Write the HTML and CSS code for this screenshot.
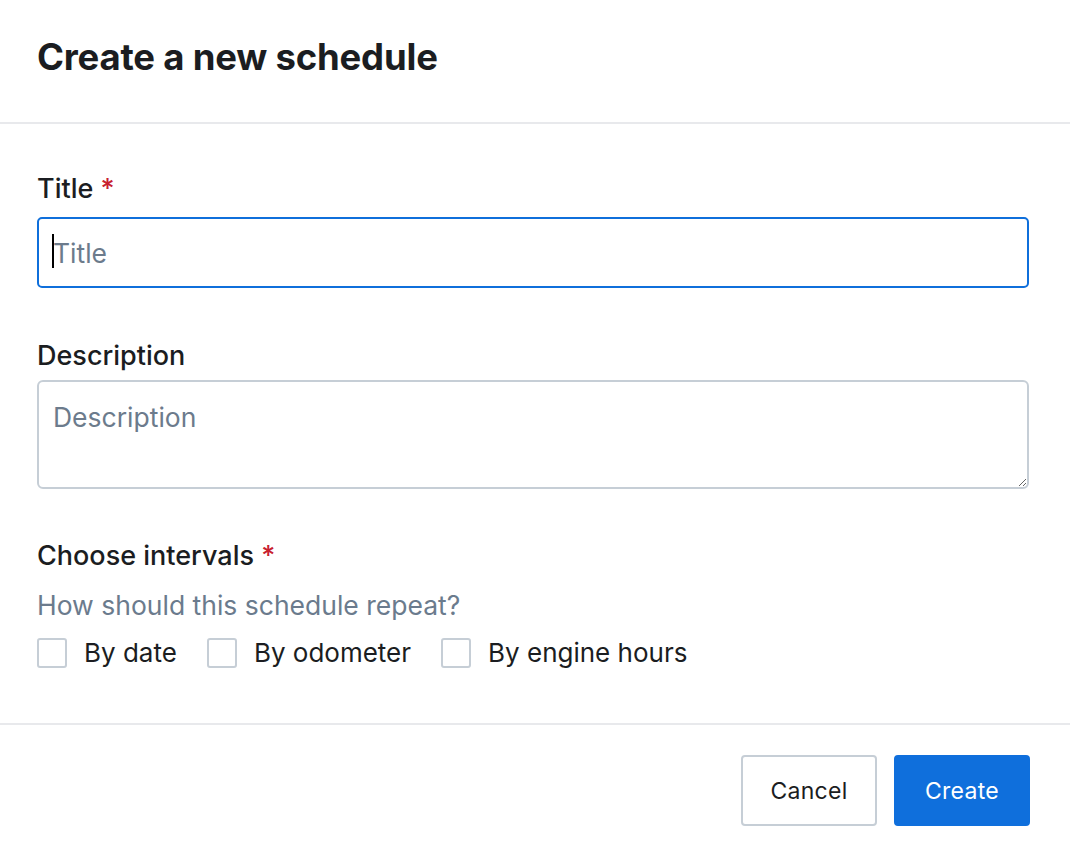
FILE: index.html
```html
<!DOCTYPE html>
<html lang="en">
<head>
<meta charset="utf-8">
<title>Create a new schedule</title>
<link rel="stylesheet" href="styles.css">
</head>
<body>
<div class="modal">
  <header class="modal-header">
    <h1 class="modal-title">Create a new schedule</h1>
  </header>
  <main class="modal-body">
    <div class="field field-title">
      <label class="field-label" for="title">Title <span class="req">*</span></label>
      <div class="input-wrap">
        <input id="title" class="text-input is-focused" type="text" placeholder="Title">
        <span class="caret"></span>
      </div>
    </div>
    <div class="field field-desc">
      <label class="field-label" for="desc">Description</label>
      <textarea id="desc" class="text-area" placeholder="Description"></textarea>
    </div>
    <div class="field field-intervals">
      <div class="field-label">Choose intervals <span class="req">*</span></div>
      <div class="help">How should this schedule repeat?</div>
      <div class="checks">
        <label class="check"><span class="box"></span><span>By date</span></label>
        <label class="check"><span class="box"></span><span>By odometer</span></label>
        <label class="check"><span class="box"></span><span>By engine hours</span></label>
      </div>
    </div>
  </main>
  <footer class="modal-footer">
    <button class="btn btn-secondary" type="button">Cancel</button>
    <button class="btn btn-primary" type="button">Create</button>
  </footer>
</div>
</body>
</html>
```
FILE: styles.css
```css
* { box-sizing: border-box; }
html, body { margin: 0; padding: 0; background: #fff; }
body {
  font-family: Inter, "Noto Sans", "Liberation Sans", sans-serif;
  color: #1b1d21;
  width: 1070px;
  height: 852px;
  overflow: hidden;
}
.modal { display: flex; flex-direction: column; height: 852px; }
.modal-header {
  height: 124px;
  border-bottom: 2px solid #e8e9ec;
  padding: 34px 40px 0 37px;
}
.modal-title {
  margin: 0;
  font-size: 36.5px;
  line-height: 46px;
  font-weight: 700;
  letter-spacing: -0.2px;
  color: #1b1d21;
}
.modal-body {
  padding: 50px 41px 0 37px;
  flex: 1;
}
.field-label {
  display: block;
  font-size: 27px;
  line-height: 30px;
  font-weight: 500;
  color: #1b1d21;
}
.req { color: #c8202f; }
.input-wrap {
  position: relative;
  margin-top: 13px;
}
.text-input {
  display: block;
  width: 100%;
  height: 71px;
  border: 2px solid #0f6fdb;
  border-radius: 5px;
  padding: 0 14px;
  font-family: inherit;
  font-size: 26.5px;
  color: #1b1d21;
  outline: none;
}
.caret {
  position: absolute;
  left: 15px;
  top: 17px;
  width: 2px;
  height: 34px;
  background: #000;
}
.text-input::placeholder, .text-area::placeholder { color: #6c7b8c; opacity: 1; }
.field-desc { margin-top: 53px; }
.text-area {
  display: block;
  width: 100%;
  height: 109px;
  margin-top: 9px;
  border: 2px solid #c6ced6;
  border-radius: 6px;
  padding: 19px 14px;
  font-family: inherit;
  font-size: 26.5px;
  line-height: 32px;
  resize: vertical;
  outline: none;
}
.field-intervals { margin-top: 52px; }
.help {
  margin-top: 19px;
  font-size: 26.5px;
  line-height: 30px;
  color: #6b7b8d;
}
.checks {
  display: flex;
  gap: 30px;
  margin-top: 18px;
}
.check {
  display: flex;
  align-items: center;
  gap: 17px;
  font-size: 26px;
  line-height: 30px;
  color: #1b1d21;
}
.box {
  width: 30px;
  height: 30px;
  border: 2px solid #c6ced6;
  border-radius: 3px;
  background: #fff;
}
.modal-footer {
  border-top: 2px solid #e8e9ec;
  display: flex;
  justify-content: flex-end;
  gap: 17px;
  padding: 30px 40px 26px 37px;
}
.btn {
  width: 136px;
  height: 71px;
  border-radius: 4px;
  font-family: inherit;
  font-size: 23px;
  letter-spacing: 0.3px;
  cursor: pointer;
}
.btn-secondary {
  background: #fff;
  border: 2px solid #c6ced6;
  color: #1b1d21;
}
.btn-primary {
  background: #0f6fdc;
  border: 2px solid #0f6fdc;
  color: #fff;
}
```
